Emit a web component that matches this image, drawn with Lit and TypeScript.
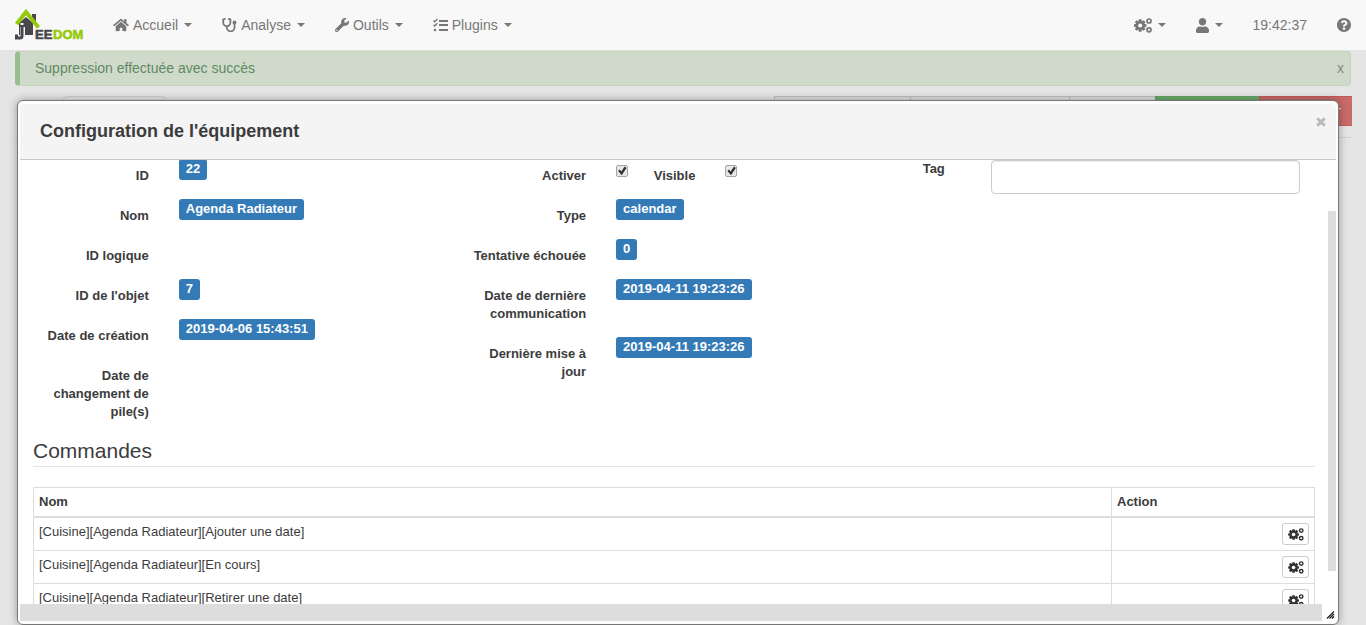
import { LitElement, html, css, svg, nothing } from "lit";
import { customElement, property } from "lit/decorators.js";

const gearTeeth = [0, 45, 90, 135].map(
  (a) => svg`<rect x="4.700" y="1.300" width="3" height="12.400" rx=".5" transform="rotate(${a} 6.200 7.500)" />`
);

const ICONS: Record<string, { w: number; box: string; art: unknown }> = {
  home: {
    w: 16,
    box: "0 0 576 512",
    art: svg`<path d="M280.37 148.26L96 300.11V464a16 16 0 0 0 16 16l112.06-.29a16 16 0 0 0 15.92-16V368a16 16 0 0 1 16-16h64a16 16 0 0 1 16 16v95.64a16 16 0 0 0 16 16.05L464 480a16 16 0 0 0 16-16V300L295.67 148.26a12.19 12.19 0 0 0-15.3 0zM571.6 251.47L488 182.56V44.05a12 12 0 0 0-12-12h-56a12 12 0 0 0-12 12v72.61L318.47 43a48 48 0 0 0-61 0L4.34 251.47a12 12 0 0 0-1.6 16.9l25.5 31A12 12 0 0 0 45.15 301l235.22-193.74a12.19 12.19 0 0 1 15.3 0L530.9 301a12 12 0 0 0 16.9-1.6l25.5-31a12 12 0 0 0-1.7-16.93z"/>`,
  },
  stethoscope: {
    w: 15,
    box: "0 0 15 14",
    art: svg`<g fill="none" stroke="currentColor" stroke-width="1.8" stroke-linecap="round" stroke-linejoin="round"><path d="M2.800 1 1.200 1.300V4.500a3.600 3.600 0 0 0 7.200 0V1.300L6.800 1M4.800 8.300v1.200a3.700 3.700 0 0 0 7.700 0V6"/><circle cx="12.500" cy="4.600" r="1.100"/></g>`,
  },
  wrench: {
    w: 14,
    box: "0 0 512 512",
    art: svg`<path d="M507.73 109.1c-2.24-9.03-13.54-12.09-20.12-5.51l-74.36 74.36-67.88-11.31-11.31-67.88 74.36-74.36c6.62-6.62 3.43-17.9-5.66-20.16-47.38-11.74-99.55.91-136.58 37.93-39.64 39.64-50.55 97.1-34.05 147.2L18.74 402.76c-24.99 24.99-24.99 65.51 0 90.5 24.99 24.99 65.51 24.99 90.5 0l213.21-213.21c50.12 16.71 107.47 5.68 147.37-34.22 37.07-37.07 49.7-89.32 37.91-136.73zM64 472c-13.25 0-24-10.75-24-24 0-13.26 10.75-24 24-24s24 10.74 24 24c0 13.25-10.75 24-24 24z"/>`,
  },
  tasks: {
    w: 15,
    box: "0 0 15 14",
    art: svg`<path d="M6 2h9v2H6zM6 6h9v2H6zM6 11h9v2H6z"/><circle cx="2" cy="12" r="1.300"/><path fill="none" stroke="currentColor" stroke-width="1.300" d="m.6 2.500 1.100 1.200L4.400 1M.6 6.800 1.700 8l2.700-2.700"/>`,
  },
  cogs: {
    w: 18,
    box: "0 0 18 15",
    art: svg`${gearTeeth}<circle cx="6.200" cy="7.500" r="4.700"/><circle class="hole" cx="6.200" cy="7.500" r="2.100"/><g fill="none" stroke="currentColor" stroke-width="1.700"><circle cx="15" cy="3" r="2"/><circle cx="15" cy="11.800" r="2"/></g>`,
  },
  user: {
    w: 13,
    box: "0 0 448 512",
    art: svg`<path d="M224 256c70.7 0 128-57.3 128-128S294.7 0 224 0 96 57.3 96 128s57.3 128 128 128zm89.6 32h-16.7c-22.2 10.2-46.9 16-72.9 16s-50.6-5.8-72.9-16h-16.7C60.2 288 0 348.2 0 422.4V464c0 26.500 21.500 48 48 48h352c26.500 0 48-21.500 48-48v-41.6c0-74.2-60.2-134.4-134.4-134.4z"/>`,
  },
  help: {
    w: 14,
    box: "8 8 496 496",
    art: svg`<path d="M504 256c0 136.997-111.043 248-248 248S8 392.997 8 256C8 119.083 119.043 8 256 8s248 111.083 248 248zM262.655 90c-54.497 0-89.255 22.957-116.549 63.758-3.536 5.286-2.353 12.415 2.715 16.258l34.699 26.31c5.205 3.947 12.621 3.008 16.665-2.122 17.864-22.658 30.113-35.797 57.303-35.797 20.429 0 45.698 13.148 45.698 32.958 0 14.976-12.363 22.667-32.534 33.976C247.128 238.528 216 254.941 216 296v4c0 6.627 5.373 12 12 12h56c6.627 0 12-5.373 12-12v-1.333c0-28.462 83.186-29.647 83.186-106.667 0-58.002-60.165-102-116.531-102zM256 338c-25.365 0-46 20.635-46 46 0 25.364 20.635 46 46 46s46-20.636 46-46c0-25.364-20.635-46-46-46z"/>`,
  },
  close: {
    w: 10,
    box: "0 0 10 10",
    art: svg`<path fill="none" stroke="currentColor" stroke-width="3" d="m1.200 1.200 7.600 7.600m0-7.600L1.200 8.800"/>`,
  },
};

@customElement("jee-icon")
class JeeIcon extends LitElement {
  @property() name = "";
  @property({ type: Number }) size = 0;
  static styles = css`
    :host { display: inline-flex; flex: none; }
    svg { display: block; fill: currentColor; }
    .hole { fill: var(--hole, #f8f8f8); }
  `;
  render() {
    const i = ICONS[this.name];
    const [, , bw, bh] = i.box.split(" ").map(Number);
    const w = this.size || i.w;
    return html`<svg aria-hidden="true" width=${w} height=${Math.round((w * bh) / bw)} viewBox=${i.box}>${i.art}</svg>`;
  }
}

@customElement("jee-navbar")
class JeeNavbar extends LitElement {
  static styles = css`
    :host { display: block; }
    nav {
      display: flex;
      justify-content: space-between;
      height: 50px;
      background: #f8f8f8;
      border-bottom: 1px solid #e2e2e2;
      color: #777;
    }
    .side { display: flex; align-items: center; }
    .brand { padding: 0 13px 0 15px; }
    .brand svg { display: block; }
    .word { font: bold 13px "Liberation Sans", Arial, sans-serif; stroke-width: .6px; }
    .dark { fill: #47474c; stroke: #47474c; }
    .green { fill: #96c90a; stroke: #96c90a; }
    .item {
      display: flex;
      align-items: center;
      gap: 4px;
      padding: 15px;
      line-height: 20px;
      color: inherit;
      text-decoration: none;
    }
    .caret {
      margin-left: 2px;
      border: 4px solid transparent;
      border-top-color: currentColor;
      border-bottom: 0;
    }
    .clock { padding: 15px; line-height: 20px; }
  `;
  private item(icon: string, text: string, label = text, caret = true) {
    return html`<a class="item" href="#" aria-label=${label}><jee-icon name=${icon}></jee-icon>${text ? html`<span>${text}</span>` : nothing}${caret ? html`<span class="caret"></span>` : nothing}</a>`;
  }
  render() {
    return html`<nav>
      <div class="side">
        <a class="brand" href="#" aria-label="Jeedom">
          <svg width="70" height="32" viewBox="0 0 70 32">
            <path fill="#47474c" d="M17 5h4v9h-4zM4 14l7-6 7 6v12H4z" />
            <path fill="none" stroke="#f8f8f8" stroke-width="5" d="M7.500 18v9q0 2-2 2H0" />
            <path fill="none" stroke="#47474c" stroke-width="3" d="M7 17v10q0 2-2 2H1.500v-3.500" />
            <path fill="#f8f8f8" d="M5.500 14h3v2h-3z" />
            <path fill="none" stroke="#96c90a" stroke-width="4" d="M1.500 15 11 3l12.500 15.500" />
            <text class="word dark" x="20" y="30">EE</text>
            <text class="word green" x="38" y="30">DOM</text>
          </svg>
        </a>
        ${this.item("home", "Accueil")}${this.item("stethoscope", "Analyse")}
        ${this.item("wrench", "Outils")}${this.item("tasks", "Plugins")}
      </div>
      <div class="side">
        ${this.item("cogs", "", "Réglages")}${this.item("user", "", "Profil")}
        <span class="clock">19:42:37</span>
        ${this.item("help", "", "Aide", false)}
      </div>
    </nav>`;
  }
}

type Field = { label: string; value?: string };

@customElement("equipment-dialog")
class EquipmentDialog extends LitElement {
  private left: Field[] = [
    { label: "ID", value: "22" },
    { label: "Nom", value: "Agenda Radiateur" },
    { label: "ID logique" },
    { label: "ID de l'objet", value: "7" },
    { label: "Date de création", value: "2019-04-06 15:43:51" },
    { label: "Date de changement de pile(s)" },
  ];
  private middle: Field[] = [
    { label: "Type", value: "calendar" },
    { label: "Tentative échouée", value: "0" },
    { label: "Date de dernière communication", value: "2019-04-11 19:23:26" },
    { label: "Dernière mise à jour", value: "2019-04-11 19:23:26" },
  ];
  private commands = ["Ajouter une date", "En cours", "Retirer une date"];

  static styles = css`
    :host {
      display: flex;
      flex-direction: column;
      box-sizing: border-box;
      border: 1px solid #777;
      border-radius: 6px;
      padding: 3px 2px;
      background: #fff;
      color: #3c3c3c;
      font-size: 13px;
      line-height: 18px;
      box-shadow: 0 0 8px rgba(0, 0, 0, .35);
    }
    * { box-sizing: border-box; }
    header {
      position: relative;
      z-index: 1;
      flex: none;
      display: flex;
      justify-content: space-between;
      align-items: flex-start;
      height: 56px;
      padding: 13px 10px 0 20px;
      border-bottom: 1px solid #c8c8c8;
      border-radius: 4px 4px 0 0;
      background: #f4f4f4;
    }
    h2 { margin: 0; font-size: 18px; line-height: 28px; }
    .close { padding: 0; border: 0; background: none; color: #bbb; line-height: 10px; }
    .viewport {
      flex: 1;
      min-height: 0;
      margin-top: -1px;
      overflow: hidden;
      display: flex;
    }
    .content { flex: 1; min-width: 0; padding: 0 13px; }
    .rail { width: 8px; padding-top: 52px; }
    .thumb { height: 360px; background: #ddd; }
    .columns { display: grid; grid-template-columns: repeat(3, 1fr); margin: 0 -15px; }
    .row { display: grid; grid-template-columns: 4fr 8fr; margin-bottom: 14px; }
    .row.checks { grid-template-columns: 4fr 1fr 2fr 5fr; }
    .name { padding: 8px 15px 0; text-align: right; font-weight: bold; }
    .value { padding-left: 15px; }
    .badge {
      display: inline-block;
      padding: 3px 7px 4px;
      border-radius: 3px;
      background: #337ab7;
      color: #fff;
      font-weight: bold;
      line-height: 14px;
      vertical-align: top;
    }
    input[type="checkbox"] {
      appearance: none;
      display: block;
      width: 12px;
      height: 12px;
      margin: 6px 0 0;
      border: 1px solid #a5a5a5;
      border-radius: 2px;
      background: #e6e6e6;
    }
    input[type="checkbox"]:checked::before {
      content: "";
      display: block;
      width: 10px;
      height: 10px;
      background: #333;
      clip-path: polygon(10% 50%, 26% 36%, 42% 54%, 76% 6%, 94% 20%, 46% 92%);
    }
    .tagrow { display: grid; grid-template-columns: 2fr 10fr; padding: 1px 15px 0; }
    .tagname { padding-left: 15px; font-weight: bold; }
    .tagfield { padding: 0 15px; }
    .tagfield input {
      display: block;
      width: 100%;
      height: 34px;
      padding: 6px 12px;
      border: 1px solid #ccc;
      border-radius: 4px;
      background: #fff;
      box-shadow: inset 0 1px 1px rgba(0, 0, 0, .08);
      font: inherit;
    }
    h3 {
      margin: 0 0 20px;
      padding-top: 1px;
      border-bottom: 1px solid #e5e5e5;
      font-size: 21px;
      font-weight: normal;
      line-height: 30px;
    }
    table { width: 100%; table-layout: fixed; border-collapse: collapse; }
    th, td { padding: 5px; border: 1px solid #ddd; text-align: left; vertical-align: top; }
    th { border-bottom-width: 2px; }
    .actions { width: 203px; text-align: right; }
    th.actions { text-align: left; }
    .action {
      --hole: #fff;
      display: inline-flex;
      align-items: center;
      justify-content: center;
      width: 27px;
      height: 22px;
      padding: 0;
      border: 1px solid #ccc;
      border-radius: 3px;
      background: #fff;
      color: #333;
      vertical-align: top;
    }
    footer {
      flex: none;
      display: flex;
      align-items: flex-end;
      justify-content: space-between;
      height: 17px;
    }
    .pane { flex: 1; height: 17px; background: #ddd; }
    .grip { width: 14px; height: 14px; }
  `;

  private row(f: Field) {
    return html`<div class="row">
      <div class="name">${f.label}</div>
      <div class="value">${f.value ? html`<span class="badge">${f.value}</span>` : nothing}</div>
    </div>`;
  }

  render() {
    return html`
      <header>
        <h2>Configuration de l'équipement</h2>
        <button class="close" aria-label="Fermer"><jee-icon name="close"></jee-icon></button>
      </header>
      <div class="viewport">
        <div class="content">
          <div class="columns">
            <div>${this.left.map((f) => this.row(f))}</div>
            <div>
              <div class="row checks">
                <label class="name" for="enabled">Activer</label>
                <div class="value"><input id="enabled" type="checkbox" checked /></div>
                <label class="name" for="visible">Visible</label>
                <div class="value"><input id="visible" type="checkbox" checked /></div>
              </div>
              ${this.middle.map((f) => this.row(f))}
            </div>
            <div class="tagrow">
              <label class="tagname" for="tag">Tag</label>
              <div class="tagfield"><input id="tag" type="text" /></div>
            </div>
          </div>
          <h3>Commandes</h3>
          <table>
            <thead>
              <tr><th>Nom</th><th class="actions">Action</th></tr>
            </thead>
            <tbody>
              ${this.commands.map(
                (c) => html`<tr>
                  <td>[Cuisine][Agenda Radiateur][${c}]</td>
                  <td class="actions"><button class="action" aria-label="Configurer ${c}"><jee-icon name="cogs" size="16"></jee-icon></button></td>
                </tr>`
              )}
            </tbody>
          </table>
        </div>
        <div class="rail"><div class="thumb"></div></div>
      </div>
      <footer>
        <div class="pane"></div>
        <svg class="grip" viewBox="0 0 14 14" aria-hidden="true">
          <path stroke="#222" stroke-width="1.300" d="m5 11.500 7-7M7.500 11.500 12 7M10 11.500l2-2" />
        </svg>
      </footer>`;
  }
}

@customElement("app-root")
class AppRoot extends LitElement {
  static styles = css`
    :host {
      display: block;
      position: relative;
      height: 100vh;
      overflow: hidden;
      background: #e5e5e5;
      font: 14px/20px "Liberation Sans", Arial, sans-serif;
    }
    * { box-sizing: border-box; }
    .page { padding: 0 15px; }
    .alert {
      display: flex;
      justify-content: space-between;
      height: 35px;
      padding: 6px 6px 0 15px;
      border: 1px solid #c6d5ba;
      border-left: 5px solid #98bf8d;
      border-radius: 4px;
      background: #d0dacb;
      color: #5f8a62;
    }
    .dismiss {
      height: 20px;
      padding: 0;
      border: 0;
      background: none;
      color: #838b80;
      font: inherit;
    }
    .toolbar {
      display: flex;
      justify-content: space-between;
      margin-top: 10px;
      padding: 0 0 11px 48px;
      border-bottom: 1px solid #cfcfcf;
    }
    .back, .tool { height: 30px; border: 1px solid #bdbdbd; background: #e0e0e0; font: inherit; }
    .back { width: 103px; border-radius: 4px 4px 0 0; background: #e5e5e5; border-color: #ccc; }
    .group { display: flex; margin-right: -1px; }
    .tool { width: 136px; border-right: 0; }
    .wide { width: 159px; }
    .narrow { width: 86px; }
    .save { width: 104px; background: #6cac6c; border-color: #63a663; }
    .remove {
      width: 93px;
      padding: 0 11px 0 0;
      border-color: #c25a58;
      background: #c96b69;
      color: #eee;
      text-align: right;
    }
    .window { position: absolute; inset: 100px 27px 0 17px; }
  `;
  render() {
    return html`
      <jee-navbar></jee-navbar>
      <main class="page">
        <div class="alert" role="status">
          <span>Suppression effectuée avec succès</span>
          <button class="dismiss" aria-label="Fermer">x</button>
        </div>
        <div class="toolbar">
          <button class="back" aria-label="Retour"></button>
          <div class="group">
            <button class="tool" aria-label="Exporter"></button>
            <button class="tool wide" aria-label="Configuration avancée"></button>
            <button class="tool narrow" aria-label="Dupliquer"></button>
            <button class="tool save" aria-label="Sauvegarder"></button>
            <button class="tool remove">Supprimer</button>
          </div>
        </div>
      </main>
      <equipment-dialog class="window" role="dialog" aria-label="Configuration de l'équipement"></equipment-dialog>`;
  }
}
